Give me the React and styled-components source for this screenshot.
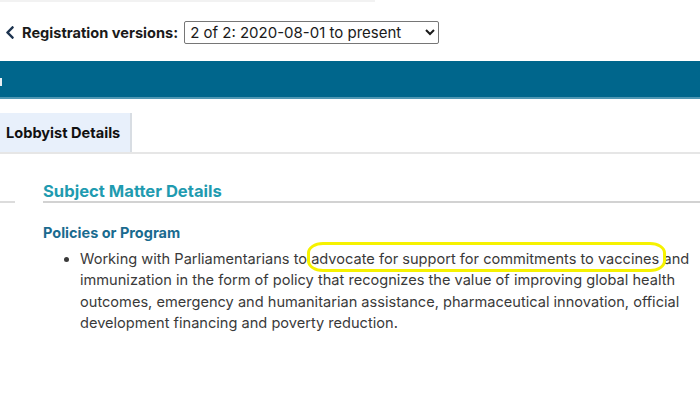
import React from 'react';
import styled, { createGlobalStyle } from 'styled-components';

const GlobalStyle = createGlobalStyle`
  body {
    margin: 0;
    background: #fff;
    font-family: Inter, "Noto Sans", sans-serif;
    color: #333;
  }
`;

const Page = styled.div`
  width: 700px;
  overflow: hidden;
`;

const TopRule = styled.div`
  width: 375px;
  height: 2px;
  background: #f2f2f2;
`;

const VersionBar = styled.div`
  display: flex;
  align-items: center;
  gap: 6px;
  padding: 19px 0 0 4px;
  height: 23px;
`;

const BackIcon = styled.svg`
  width: 12px;
  height: 15px;
  fill: #1d3450;
`;

const VersionLabel = styled.label`
  font-weight: 700;
  font-size: 14.6px;
  color: #1a1a1a;
`;

const VersionSelect = styled.select`
  width: 255px;
  height: 23px;
  font-family: Inter, sans-serif;
  font-size: 15px;
  color: #1a1a1a;
  border: 1px solid #767676;
  border-radius: 2px;
  background: #fff;
  padding: 0 1px;
`;

const BlueBar = styled.div`
  margin-top: 17px;
  height: 36px;
  background: #00668c;
  border-bottom: 2px solid #4f97b3;
  position: relative;

  /* tail of a title that is scrolled out of view on the left */
  &::before {
    content: '';
    position: absolute;
    left: 0;
    top: 17px;
    width: 2px;
    height: 8px;
    background: #e8eef2;
  }
`;

const Tabs = styled.div`
  display: flex;
  margin-top: 14px;
  border-bottom: 2px solid #e6e6e6;
`;

const Tab = styled.div`
  width: 124px;
  height: 39px;
  padding-left: 6px;
  display: flex;
  align-items: center;
  background: ${p => (p.$active ? '#e8f0fb' : 'transparent')};
  border-right: 2px solid #d8dde3;
  font-weight: 700;
  font-size: 14.6px;
  color: #111;
`;

const Content = styled.div`
  display: grid;
  grid-template-columns: 15px 1fr;
  column-gap: 28px;
  margin-top: 28px;
`;

const SideStub = styled.div`
  height: 19px;
  border-bottom: 2px solid #dcdcdc;
`;

const Section = styled.section``;

const SectionTitle = styled.h2`
  margin: 0;
  font-size: 16.6px;
  font-weight: 700;
  line-height: 19px;
  color: #1f9bb0;
  border-bottom: 2px solid #d2d2d2;
`;

const SubTitle = styled.h3`
  margin: 21px 0 0;
  font-size: 14.5px;
  font-weight: 700;
  color: #1a6b8f;
`;

const List = styled.ul`
  margin: 8px 0 0;
  padding-left: 37px;
  width: 615px;
  font-size: 14.6px;
  line-height: 21.3px;
  color: #3a3a3a;
`;

const Marked = styled.span`
  position: relative;
  &::after {
    content: '';
    position: absolute;
    left: -4px;
    right: -7px;
    top: -8px;
    bottom: -4px;
    border: 3px solid #f6f200;
    border-radius: 16px / 11px;
  }
`;

export default function App() {
  return (
    <Page>
      <GlobalStyle />
      <TopRule />
      <VersionBar>
        <BackIcon viewBox="0 0 320 512">
          <path d="M34.5 239L228.9 44.7c9.4-9.4 24.6-9.4 33.9 0l22.7 22.7c9.4 9.4 9.4 24.5 0 33.9L131.5 256l154 154.8c9.3 9.4 9.3 24.5 0 33.9l-22.7 22.7c-9.4 9.4-24.6 9.4-33.9 0L34.5 273c-9.4-9.4-9.4-24.6 0-34z" />
        </BackIcon>
        <VersionLabel htmlFor="versions">Registration versions:</VersionLabel>
        <VersionSelect id="versions" defaultValue="2">
          <option value="1">1 of 2: 2019-05-01 to 2020-07-31</option>
          <option value="2">2 of 2: 2020-08-01 to present</option>
        </VersionSelect>
      </VersionBar>
      <BlueBar />
      <Tabs>
        <Tab $active>Lobbyist Details</Tab>
      </Tabs>
      <Content>
        <SideStub />
        <Section>
          <SectionTitle>Subject Matter Details</SectionTitle>
          <SubTitle>Policies or Program</SubTitle>
          <List>
            <li>
              Working with Parliamentarians to{' '}
              <Marked>advocate for support for commitments to vaccines</Marked> and
              immunization in the form of policy that recognizes the value of improving
              global health outcomes, emergency and humanitarian assistance,
              pharmaceutical innovation, official development financing and poverty
              reduction.
            </li>
          </List>
        </Section>
      </Content>
    </Page>
  );
}
